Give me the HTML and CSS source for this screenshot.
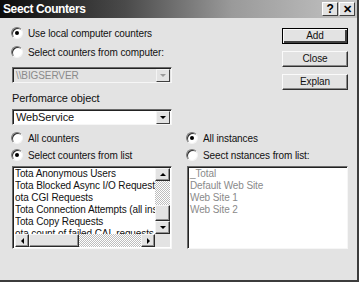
FILE: index.html
```html
<!DOCTYPE html>
<html>
<head>
<meta charset="utf-8">
<link rel="stylesheet" href="styles.css">
</head>
<body>
<div class="window">
  <div class="titlebar">
    <span class="title">Seect Counters</span>
    <div class="tbtns">
      <span class="tbtn">?</span>
      <span class="tbtn x">&#x2715;</span>
    </div>
  </div>
  <div class="content">
    <div class="top">
      <div class="leftcol">
        <div class="radio-row r1"><span class="radio checked"></span><span>Use local computer counters</span></div>
        <div class="radio-row r2"><span class="radio"></span><span>Select counters from computer:</span></div>
        <div class="combo disabled"><span class="ctext">\\BIGSERVER</span><span class="dbtn"><span class="tri"></span></span></div>
        <div class="label">Perfomarce object</div>
        <div class="combo obj"><span class="ctext">WebService</span><span class="dbtn"><span class="tri"></span></span></div>
      </div>
      <div class="buttons">
        <div class="btn default">Add</div>
        <div class="btn">Close</div>
        <div class="btn">Explan</div>
      </div>
    </div>
    <div class="bottom">
      <div class="col">
        <div class="radio-row"><span class="radio"></span><span>All counters</span></div>
        <div class="radio-row"><span class="radio checked"></span><span>Select counters from list</span></div>
        <div class="clist">
          <div class="items">
            <div class="item">Tota Anonymous Users</div>
            <div class="item">Tota Blocked Async I/O Requests</div>
            <div class="item">ota CGI Requests</div>
            <div class="item">Tota Connection Attempts (all instances)</div>
            <div class="item">Tota Copy Requests</div>
            <div class="item">ota count of failed CAL requests</div>
          </div>
          <div class="vscroll">
            <div class="sbtn"><span class="tri up"></span></div>
            <div class="strack"></div>
            <div class="sthumb"></div>
            <div class="sbtn"><span class="tri"></span></div>
          </div>
          <div class="hscroll">
            <div class="sbtn"><span class="tri left"></span></div>
            <div class="hthumb"></div>
            <div class="htrack"></div>
            <div class="sbtn"><span class="tri right"></span></div>
          </div>
          <div class="corner"></div>
        </div>
      </div>
      <div class="col">
        <div class="radio-row"><span class="radio checked"></span><span>All instances</span></div>
        <div class="radio-row"><span class="radio"></span><span>Seect nstances from list:</span></div>
        <div class="listbox instances">
          <div class="item">_Total</div>
          <div class="item">Default Web Site</div>
          <div class="item">Web Site 1</div>
          <div class="item">Web Site 2</div>
        </div>
      </div>
    </div>
  </div>
</div>
</body>
</html>
```
FILE: styles.css
```css
* { box-sizing: border-box; }
html, body { margin: 0; padding: 0; }
body {
  width: 359px; height: 282px; overflow: hidden;
  font-family: "Liberation Sans", Arial, sans-serif;
  font-size: 10px; letter-spacing: -0.1px; color: #111;
  background: #e3e3e3;
}
.window {
  width: 359px; height: 282px;
  background: #e3e3e3;
  border-right: 2px solid #3c3c3c;
  border-bottom: 2px solid #3c3c3c;
  display: flex; flex-direction: column;
}
.titlebar {
  height: 18px; flex: none;
  background: linear-gradient(to right, #0c0c0c 0%, #4a4a4a 35%, #9a9a9a 65%, #c4c4c4 100%);
  display: flex; align-items: center; justify-content: space-between;
  padding: 0 2px 0 3px;
}
.title { color: #fff; font-weight: bold; font-size: 12px; letter-spacing: -0.4px; }
.tbtns { display: flex; gap: 1px; }
.tbtn {
  width: 16px; height: 14px;
  background: #e3e3e3;
  border: 1px solid; border-color: #fff #404040 #404040 #fff;
  font-weight: bold; font-size: 12px; line-height: 12px; text-align: center; color: #000;
}
.tbtn.x { font-size: 11px; }
.content { flex: 1; padding: 0 9px 0 12px; display: flex; flex-direction: column; }
.top { display: flex; justify-content: space-between; align-items: flex-start; }
.leftcol { width: 160px; display: flex; flex-direction: column; }
.radio-row { display: flex; align-items: center; height: 13px; white-space: nowrap; flex: none; }
.radio-row > span:last-child { margin-left: 5px; }
.r1 { margin-top: 8.5px; }
.r2 { margin-top: 6px; }
.radio {
  width: 12px; height: 12px; border-radius: 50%; flex: none; margin-left: -1px;
  background: #fff;
  border: 1px solid; border-color: #7a7a7a #f4f4f4 #f4f4f4 #7a7a7a;
  box-shadow: inset 1px 1px 0 #303030;
  position: relative;
}
.radio.checked::after {
  content: ""; position: absolute; left: 3px; top: 3px; width: 4px; height: 4px;
  border-radius: 50%; background: #000;
}
.combo {
  height: 16px; display: flex; align-items: center; justify-content: space-between;
  background: #fff;
  border: 1px solid; border-color: #6a6a6a #f6f6f6 #f6f6f6 #6a6a6a;
  box-shadow: inset 1px 1px 0 #222;
  padding: 1px 1px 0 3px;
  font-size: 11px;
}
.combo.disabled { background: #e3e3e3; color: #8a8a8a; margin-top: 8px; font-size: 10px; }
.combo.obj { margin-top: 4px; }
.dbtn {
  width: 14px; height: 13px; background: #e3e3e3;
  border: 1px solid; border-color: #f4f4f4 #404040 #404040 #f4f4f4;
  display: flex; align-items: center; justify-content: center;
}
.tri {
  display: block; width: 0; height: 0;
  border-left: 3px solid transparent; border-right: 3px solid transparent;
  border-top: 3px solid #000;
}
.combo.disabled .tri { border-top-color: #9a9a9a; }
.tri.up { border-top: 0; border-bottom: 3px solid #000; }
.tri.left { border: 0; border-top: 3px solid transparent; border-bottom: 3px solid transparent; border-right: 3px solid #000; }
.tri.right { border: 0; border-top: 3px solid transparent; border-bottom: 3px solid transparent; border-left: 3px solid #000; }
.label { margin-top: 9px; height: 13px; line-height: 13px; font-size: 11px; }
.buttons { width: 66px; display: flex; flex-direction: column; gap: 7px; margin-top: 10px; }
.btn {
  height: 16px; background: #e3e3e3; text-align: center; line-height: 14px;
  border: 1px solid; border-color: #fafafa #303030 #303030 #fafafa;
  box-shadow: inset -1px -1px 0 #8a8a8a;
}
.btn.default { border: 1px solid #000; box-shadow: inset 1px 1px 0 #fafafa, inset -2px -2px 0 #404040; }
.bottom {
  display: grid; grid-template-columns: 160px 161px; column-gap: 15px;
  margin-top: 7px;
}
.col { display: flex; flex-direction: column; gap: 4px; }
.listbox, .clist {
  background: #fff; height: 83px; margin-top: 0.5px; flex: none;
  border: 1px solid; border-color: #6a6a6a #f6f6f6 #f6f6f6 #6a6a6a;
  box-shadow: inset 1px 1px 0 #222;
  padding: 1px 1px 1px 2px;
  overflow: hidden;
}
.item { height: 12px; line-height: 12px; white-space: nowrap; }
.instances .item { color: #8a8a8a; }
.clist {
  display: grid;
  grid-template-columns: 140px 15px;
  grid-template-rows: 66px 13px;
  padding: 1px 1px 1px 2px;
}
.items { overflow: hidden; min-width: 0; min-height: 0; }
.vscroll {
  display: grid; grid-template-rows: 13px 24px 1fr 13px;
  background: #e3e3e3; min-height: 0;
}
.sbtn {
  background: #e3e3e3;
  border: 1px solid; border-color: #f4f4f4 #2a2a2a #2a2a2a #f4f4f4;
  box-shadow: inset -1px -1px 0 #909090;
  display: flex; align-items: center; justify-content: center;
}
.strack, .htrack { background: repeating-conic-gradient(#fff 0 25%, #bdbdbd 0 50%) 0 0/2px 2px; }
.sthumb, .hthumb {
  background: #e3e3e3;
  border: 1px solid; border-color: #f4f4f4 #2a2a2a #2a2a2a #f4f4f4;
  box-shadow: inset -1px -1px 0 #909090;
}
.hscroll { display: grid; grid-template-columns: 14px 50px 1fr 14px; }
.corner { background: #e3e3e3; }
```
